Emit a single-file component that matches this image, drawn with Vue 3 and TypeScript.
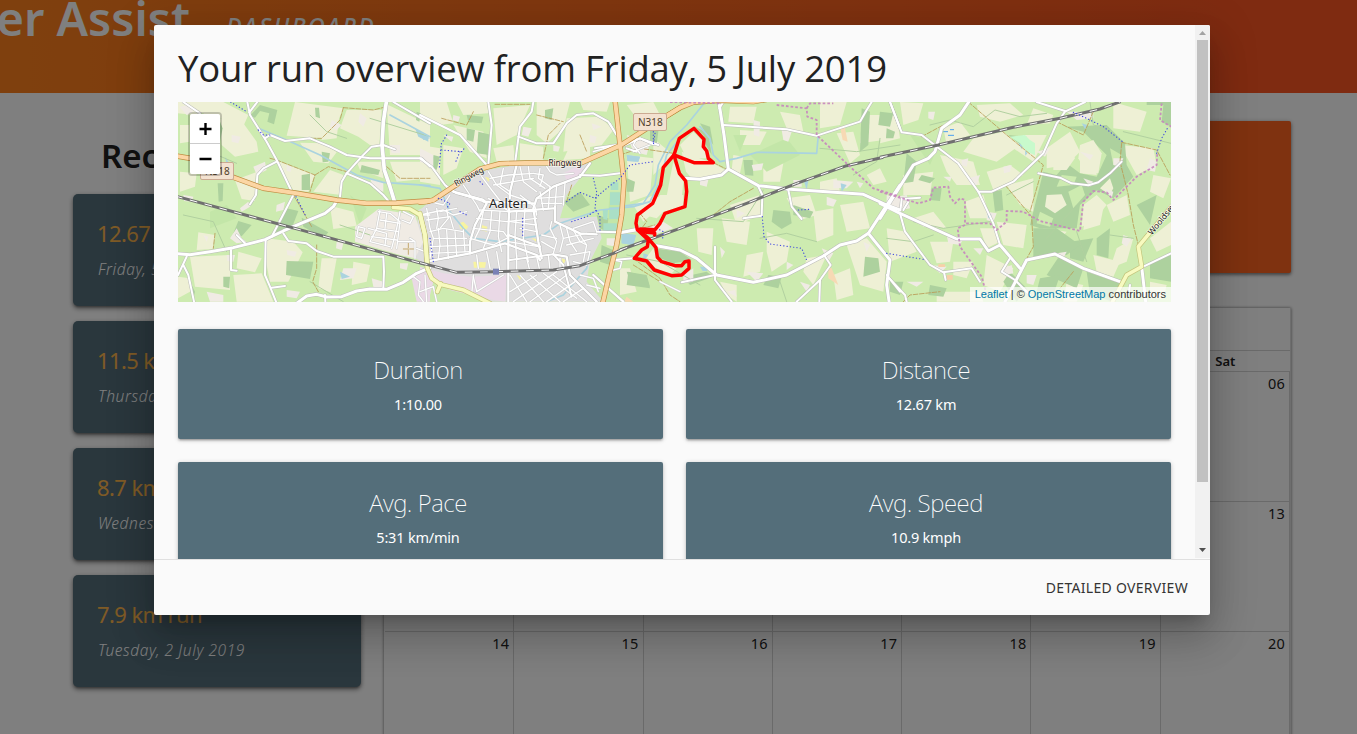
<script setup lang="ts">
interface Shape { t: string; p: string; w?: number }

const runs = [
  { title: '12.67 km run', date: 'Friday, 5 July 2019' },
  { title: '11.5 km run', date: 'Thursday, 4 July 2019' },
  { title: '8.7 km run', date: 'Wednesday, 3 July 2019' },
  { title: '7.9 km run', date: 'Tuesday, 2 July 2019' },
]
const stats = [
  { name: 'Duration', value: '1:10.00' },
  { name: 'Distance', value: '12.67 km' },
  { name: 'Avg. Pace', value: '5:31 km/min' },
  { name: 'Avg. Speed', value: '10.9 kmph' },
]
const weekdays = ['Sun', 'Mon', 'Tue', 'Wed', 'Thu', 'Fri', 'Sat']
const days = ['30', '01', '02', '03', '04', '05', '06', '07', '08', '09', '10', '11', '12', '13', '14', '15', '16', '17', '18', '19', '20']

// Map sections share one scale; each has its own origin.
const origin: Record<string, number> = { a: 170, b: 420, c: 620, d: 880 }
const place = (t: string): string => `translate(${origin[t]} 95) scale(.33333)`
const parse = (t: string, text: string): Shape[] =>
  text.trim().split('\n').map((line) => ({ t, p: line.trim() }))
const parseRoads = (t: string, w: number, text: string): Shape[] =>
  parse(t, text).map((s) => ({ ...s, w }))

const fields: Shape[] = [
  ...parse('a', `24,21 160,21 235,60 215,105 150,68 24,55
    150,70 220,85 260,140 265,170 195,185 155,150
    375,21 520,40 505,75 455,130 350,122
    390,143 460,145 500,172 475,205 430,200
    530,45 635,45 628,150 600,150 565,125 510,100
    315,195 435,240 415,290 370,285
    480,225 520,240 515,300 430,290
    195,255 258,232 255,318 215,312
    85,412 135,420 128,462 80,465
    290,430 370,440 398,472 355,560 300,560 288,500
    205,470 275,490 255,532 200,520
    60,485 180,480 180,585 75,575
    24,545 60,550 60,590 24,610
    455,490 500,490 482,592 445,580
    480,332 550,350 560,392 490,402
    190,540 275,535 310,620 200,620
    650,28 780,90 780,180 660,180
    560,200 635,200 640,250 570,225
    660,200 760,200 780,250 680,260
    30,230 80,235 75,275 30,290
    30,90 58,90 58,140 30,145
    550,500 600,510 590,560 545,570
    450,60 510,45 500,130 455,135`),
  ...parse('b', `0,21 80,21 100,85 60,90 0,60
    220,40 330,30 290,120 230,150
    100,90 190,110 200,190 150,170
    350,21 450,21 430,100 380,145 350,120
    0,150 60,160 60,270 0,260
    440,70 540,65 580,105 545,150 430,170
    620,180 700,190 690,300 630,320
    620,30 700,21 720,60 650,70
    70,150 130,160 110,220 70,240
    220,160 280,150 285,200 230,200
    300,145 370,155 370,195 300,195
    460,130 510,140 510,190 430,195
    110,21 200,21 205,55 130,60
    480,21 570,21 560,50 490,45
    640,330 700,300 740,320 670,380
    700,130 760,180 700,240`),
  ...parse('c', `330,35 410,35 400,85 325,80
    360,105 440,110 420,150 360,150
    480,50 540,60 550,110 500,100
    185,170 280,205 315,225 300,245 215,250 198,230
    120,300 190,300 190,335 130,350 110,370 70,360
    330,330 420,300 420,360 350,390
    305,370 390,380 380,450 320,440
    440,410 510,440 500,500 455,530 440,470
    300,560 350,570 350,620 320,600
    500,310 570,300 590,360 540,375
    600,260 650,250 660,290 600,290
    660,330 730,320 750,400 680,410
    730,60 830,60 830,130 720,145
    740,240 780,220 800,260 760,270
    560,490 620,480 580,570 550,530
    680,450 740,430 800,500 790,590 720,570
    70,500 150,540 170,520 110,490 100,460
    0,520 30,520 50,590 0,600
    220,110 250,140 260,190 200,190 180,150
    580,350 640,340 640,420 590,440
    340,180 370,185 360,235 335,225
    430,200 490,205 480,260 430,260
    600,21 680,21 660,90 600,100
    650,115 700,110 720,180 690,205
    230,400 280,400 275,480 235,470
    380,480 430,470 420,530 370,545
    640,540 690,520 700,600 650,615
    160,200 190,260 185,310 135,330 150,250`),
  ...parse('d', `60,21 130,25 115,75 70,90
    290,30 390,25 430,60 360,80 300,65
    280,130 370,110 420,150 350,200 250,170
    20,60 50,60 60,130 0,145
    180,180 280,200 300,270 230,270 200,230
    430,120 500,120 460,200 400,160
    320,230 390,210 430,240 340,285
    380,270 460,250 460,350 420,330
    70,240 160,230 150,300 70,300
    255,320 310,300 330,370 270,370
    350,380 440,390 430,460 370,450
    20,400 80,410 110,470 30,500
    320,480 400,520 360,590 310,570
    150,440 220,440 210,500 170,505
    500,160 570,110 600,170 560,210 500,220
    600,160 640,170 650,240 600,235
    620,340 670,340 660,390 610,405
    720,150 820,160 830,210 770,240
    700,21 800,50 780,110 700,100
    760,430 740,500 690,520 710,460
    490,290 560,300 570,340 510,350
    810,430 873,380 873,450 830,470
    490,400 560,410 510,470 470,460
    640,480 720,500 700,545 650,530
    170,590 300,590 310,620 170,620
    190,100 240,80 270,120 200,150
    460,40 520,60 510,85 440,90
    100,370 160,350 200,400 130,395
    300,400 345,400 360,440 320,460
    220,500 280,500 260,550 220,540
    680,330 740,300 750,360 700,380
    820,240 873,250 850,310 810,290
    560,560 610,570 590,620 550,620
    810,560 860,570 850,610 810,610`),
]
const lightGreens: Shape[] = [
  ...parse('a', `100,55 120,100 95,130 65,60
    540,300 590,340 570,390
    120,350 170,330 200,370 120,400`),
  ...parse('c', `340,120 380,120 360,170
    390,180 500,130 540,180 440,230`),
  ...parse('d', `90,120 180,140 150,210`),
  ...parse('b', `570,290 598,290 600,400 560,400`),
]
const woods: Shape[] = [
  ...parse('a', `270,30 322,45 312,88 292,80 298,55 270,48 255,68 240,62
    350,498 430,500 420,552 348,540
    350,340 385,348 365,400 308,422
    395,368 475,412 460,430 400,395
    205,378 245,390 215,424 190,415
    395,240 420,236 420,285 395,285
    143,265 160,265 158,318 146,320
    435,38 447,38 450,70 437,65
    455,170 480,175 475,200 458,202
    160,545 180,545 178,580 160,575
    575,210 630,225 625,240 570,232
    740,50 752,55 748,80 738,75
    150,80 158,100 150,140
    60,560 75,590 68,620`),
  ...parse('b', `175,110 215,120 208,180 170,175
    140,100 165,105 160,140 140,135
    140,60 190,65 185,85 145,82
    375,45 400,40 395,75 375,70
    430,320 480,290 510,330 460,350
    530,360 565,370 560,410 540,400
    620,250 645,260 640,290 620,290
    625,530 680,545 690,580 620,570
    690,90 720,70 710,150 690,140
    545,450 590,470 570,510 540,500
    40,180 60,185 50,225 35,215`),
  ...parse('c', `225,95 265,115 275,180 258,150 250,120
    370,195 398,195 400,242 375,240
    460,345 510,350 515,385 485,402 455,380
    780,50 820,55 810,95 775,90
    725,40 750,50 745,150 720,170
    520,330 580,350 570,370 520,360
    20,530 80,540 90,575 35,570
    100,460 180,470 215,495 160,505 120,490
    445,540 485,545 475,580 430,570
    735,485 775,490 780,530 730,545
    190,545 260,530 280,545 210,570
    240,85 270,95 280,150 262,125`),
  ...parse('d', `555,95 680,90 735,145 740,210 760,245 700,310 650,285 600,330 590,400 480,400 450,390 490,230 530,240 560,205 600,235 650,245 680,180 610,110
    800,21 873,21 873,95 845,80 850,30 800,30
    80,175 110,200 100,260 70,265
    155,278 185,280 180,318 150,315
    338,290 365,285 370,345 345,350
    385,120 440,125 420,135 465,180 440,165
    540,480 610,520 590,580 500,540
    620,530 720,565 700,620 630,600
    570,440 640,430 610,500 570,490
    460,400 530,400 600,450 560,480 460,490
    810,500 873,480 873,560 810,550
    480,550 540,540 520,600 470,590
    30,560 70,560 60,600 30,590
    650,430 690,400 685,490 650,480
    770,330 830,300 810,390
    125,240 165,250 150,265 115,255
    20,100 45,110 40,130 18,130
    370,560 390,530 440,580 410,620
    150,570 200,580 190,605 145,600`),
]
const clearings: Shape[] = [
  ...parse('d', `500,300 545,298 560,330 525,355 495,335
    600,150 640,135 665,175 655,235 620,235 595,190
    520,185 560,140 585,190 560,225 520,225
    660,280 690,250 700,280 690,300
    610,330 650,300 680,330 640,380 605,395`),
]
const glades: Shape[] = [
  ...parse('d', `565,290 605,270 615,300 580,340
    480,350 520,370 510,395 470,385
    545,240 590,245 580,270 530,275
    690,160 725,180 700,210`),
]
const town: Shape[] = [
  ...parse('b', `100,278 200,225 290,210 420,212 505,205 480,250 440,300 420,370 530,365 545,430 510,500 500,560 550,620 200,620 60,550 20,510 0,500 0,345 40,310`),
  ...parse('a', `745,345 780,330 780,510 735,490`),
]
const yards: Shape[] = [
  ...parse('a', `555,395 625,342 735,360 760,440 735,490 690,480 555,440
    185,120 212,125 205,145 185,140
    485,75 515,90 500,105 480,95
    250,215 285,200 290,225 260,240
    350,210 365,215 362,230 350,228
    200,400 215,430 230,440 200,445 180,430
    100,420 115,425 110,440
    570,55 590,70 580,95 565,80
    320,330 345,320 340,345 318,350
    605,550 640,560 635,580 610,575
    500,440 520,445 515,465 498,460
    170,480 195,480 190,500 172,498
    110,590 160,600 160,620 120,620
    350,585 390,590 380,610 350,605
    40,300 70,305 65,320 42,318
    210,340 235,320 240,335 215,350
    660,150 690,150 690,175 665,175
    690,505 715,505 710,525 690,520
    600,250 640,260 640,290 610,280
    520,520 560,520 550,550 510,555
    28,35 60,30 70,50 50,60
    350,465 380,470 375,485 352,480`),
  ...parse('b', `100,60 120,65 115,80 98,75
    510,120 530,125 525,145 508,142
    400,150 420,155 415,170 400,168
    620,120 690,140 680,180 640,170
    650,410 730,380 760,400 700,420
    560,430 600,430 590,455 560,450
    0,160 40,180 40,215 0,200
    515,85 545,95 520,105
    70,120 100,125 95,140
    310,95 335,100 325,125 305,120`),
  ...parse('c', `400,75 420,80 418,125 402,120
    485,105 515,110 505,140 490,135
    240,250 265,255 260,275 240,270
    395,210 430,205 425,225 400,228
    520,255 545,255 545,275 522,275
    800,300 840,310 840,350 800,345
    350,345 375,355 350,370
    620,305 650,315 640,335 620,330
    300,455 315,470 305,490
    605,460 640,475 625,500
    190,540 220,520 220,560 190,565
    320,590 345,585 350,605
    710,260 730,265 720,280
    380,530 430,535 410,560
    500,500 520,510 500,525
    730,440 750,450 740,470
    640,255 700,260 680,280 640,280
    540,560 570,570 560,590`),
  ...parse('d', `20,310 80,300 90,340 40,350
    245,195 265,190 260,215 245,210
    370,215 395,210 390,230 372,235
    265,250 300,240 290,270 270,265
    145,50 165,50 160,75 145,70
    190,245 215,245 210,260
    320,350 350,355 340,380 320,375
    200,420 250,430 240,450 205,445
    280,460 310,460 300,480
    370,520 395,510 400,535 375,540
    440,540 470,540 460,570 440,565
    470,170 510,160 495,185
    560,50 640,50 640,70 590,75
    600,170 640,180 630,195
    700,190 730,190 720,215 700,210
    670,280 700,290 695,310
    610,250 640,260 630,275
    730,420 755,430 740,455 725,445
    530,475 560,470 550,490
    150,510 200,515 180,535
    810,190 830,200 825,230 800,225
    80,560 130,560 110,575`),
]
const industry: Shape[] = [
  ...parse('b', `0,515 70,535 150,545 260,540 255,620 190,610 90,585 40,560 25,620 0,620
    430,235 470,215 490,220 475,250 440,255`),
  ...parse('a', `725,550 780,520 780,620 740,620`),
]
const waters: Shape[] = [
  ...parse('a', `735,100 775,125 775,140 745,125
    510,530 540,545 515,552
    165,185 178,205 170,210`),
  ...parse('b', `620,180 660,185 655,200 622,198
    605,415 648,420 640,450 605,445
    0,110 30,130 10,135`),
  ...parse('c', `240,515 262,515 262,528 248,528
    5,415 48,420 40,450 5,445
    662,265 680,270 665,290
    552,258 565,258 560,285
    20,180 60,185 55,200 22,198
    70,475 85,480 70,500`),
  ...parse('d', `415,145 430,150 425,162
    605,85 622,90 615,102
    322,355 335,360 325,370
    435,165 442,175 436,182`),
]
const sports: Shape[] = parse('b', `572,262 595,262 595,285 572,285
    570,292 600,292 600,330 570,330
    568,336 600,336 598,372 568,372
    548,345 564,345 562,375 550,372
    550,385 590,385 590,410 550,410`)
const streams: Shape[] = [
  ...parse('a', `265,100 350,135 450,180 560,240 640,262 780,272
    660,60 780,125`),
  ...parse('b', `0,270 60,280 90,350 130,400 160,430 240,440 370,420 420,385 540,345 640,335 690,320 720,260 740,180 780,130
    510,470 500,520 430,600 380,620`),
  ...parse('c', `250,28 200,90 150,140 115,210 105,270 70,325 0,335
    240,95 270,130 280,180 300,200 350,190 410,172 590,175 595,120`),
]
const hedges: Shape[] = [
  ...parse('a', `600,70 780,125
    95,160 200,205
    420,60 470,110 530,130
    40,360 130,380 170,470
    510,390 600,420
    420,560 470,590 520,620`),
  ...parse('c', `430,285 370,380 230,370
    600,160 710,170 840,150
    420,430 500,415 590,440
    20,480 120,500 240,570
    480,560 500,620
    780,130 770,200 700,240`),
  ...parse('d', `150,90 210,75 280,95 345,45 420,65 500,55
    380,300 460,260
    100,380 190,400 330,380
    500,430 590,330 650,285
    730,110 873,145
    20,430 100,440 160,420
    590,410 620,500
    690,420 760,430
    630,21 640,90 680,100`),
]
const tracks: Shape[] = [
  ...parse('a', `300,190 320,195 435,240 420,290
    435,240 475,215 530,230
    520,38 510,75 455,130 420,130
    520,38 610,45 650,35
    440,450 440,520 428,560 445,590
    650,215 690,250 780,250
    370,300 385,325 425,395
    135,415 130,460
    715,445 715,478
    700,462 732,462`),
  ...parse('b', `65,70 140,90 160,50
    370,190 385,120 420,85
    225,28 330,28
    350,60 430,80
    640,510 720,560 780,590
    455,270 440,320
    480,120 500,170`),
  ...parse('c', `280,203 325,225
    60,355 80,380 65,400 105,390
    400,280 330,320 280,360 200,390
    40,490 120,550 150,600 180,620
    0,180 60,160 160,175`),
  ...parse('d', `265,21 380,120 490,210 450,350
    375,270 455,365 460,455 435,500
    530,80 610,120 640,50
    725,145 720,200 745,300 760,390 775,450
    725,142 830,165 870,240
    70,620 90,600 180,590
    580,530 540,580
    125,125 190,90`),
]
const roads: Shape[] = [
  ...parseRoads('b', 4, `205,230 230,270 270,300 330,320
    185,245 215,285 250,330
    250,220 240,270 270,290
    130,270 170,330 180,350
    300,215 310,260 350,290
    325,215 330,250 375,280
    360,220 355,250 390,275
    210,250 265,240 340,235
    220,270 280,260 340,250
    340,235 370,240 360,275
    380,215 390,230 410,240 460,235
    360,290 370,345
    390,275 385,340
    410,270 405,335
    435,265 430,330
    350,310 430,305
    365,325 425,325
    300,300 345,335 350,360
    205,310 270,350
    130,300 190,320
    180,345 270,350 350,350
    170,370 260,380 350,370
    160,400 250,410 265,430
    190,350 180,400 165,430
    215,350 210,410 190,460
    240,350 235,425 245,470
    290,350 285,420 290,490
    315,340 310,430 325,500
    270,380 350,390
    265,440 355,455
    300,400 350,410
    150,430 220,450 260,430
    0,360 70,345 100,360 140,350
    20,340 30,400 40,430 30,490
    50,340 55,370 50,400
    80,345 85,370 60,400
    20,375 90,365 100,400
    30,410 70,400 130,410
    40,430 140,430
    55,400 60,450 55,490
    80,405 85,490
    105,410 110,480
    130,405 135,470
    30,455 150,450
    30,475 150,470
    395,380 390,400 410,440 400,475
    420,390 430,430 420,470
    440,400 450,440 470,470
    460,405 480,440 500,450
    430,430 500,415
    440,450 520,430
    460,400 520,380 530,410
    480,420 500,450 490,500
    450,480 510,470 500,510 460,500
    365,420 410,430
    365,440 400,460
    270,540 320,620
    300,540 370,620
    330,540 420,620
    370,535 470,610
    400,540 500,620
    270,590 350,540
    280,620 410,530
    330,620 440,540
    380,620 465,560
    430,620 490,580
    200,470 210,520
    170,480 175,520
    230,470 240,530
    290,480 290,525
    320,490 330,530
    350,485 360,530
    385,480 390,525
    420,490 420,520
    480,540 520,550 535,590
    500,570 540,580
    90,300 70,330 30,320
    60,350 110,340`),
  ...parseRoads('a', 4, `625,350 660,355 690,380 680,460
    690,350 680,400 665,460
    630,375 690,385
    620,400 685,410
    605,425 680,435
    630,345 620,400 600,440 660,455
    565,395 585,400 575,430 560,425 565,395
    595,400 650,415 645,450
    700,350 730,365 720,385 695,375
    650,355 645,400
    720,430 735,440 735,490
    740,460 765,470 765,500
    685,440 730,440
    750,360 780,360
    730,545 750,560 745,600 760,620
    765,540 770,620`),
  ...parseRoads('b', 4, `520,170 590,150
    590,120 570,85
    650,130 640,150 660,175
    720,560 780,590
    160,540 155,600
    0,590 40,575 50,620
    250,540 170,590 160,545
    580,495 605,500 600,520 580,525
    640,170 690,150`),
  ...parseRoads('a', 6, `40,21 90,55
    232,21 240,60 290,140 320,195 370,300 305,425
    262,21 238,52
    285,130 300,120 345,138 420,130 480,155 530,180 600,190 755,190 780,215
    510,305 515,260 530,235 575,185 605,155 640,150 675,163
    530,235 600,265 640,300 655,318
    320,200 280,220 262,240 258,300 240,328
    287,434 285,540 300,575 318,620
    305,578 345,573
    340,415 355,438 410,445 440,468 490,485 640,485 642,530 640,580
    200,420 225,445
    183,465 183,525 200,527
    24,540 50,485
    40,510 55,540 72,620
    465,600 466,620
    670,21 720,50 780,85`),
  ...parseRoads('b', 6, `0,60 60,90 120,120 200,210
    205,21 215,90 205,210
    340,21 335,50 300,95 295,130 285,205
    295,125 350,145 400,145 440,85 470,60 520,55 565,80 590,120
    0,190 35,215 75,270 100,290
    80,275 110,295 190,315
    455,605 430,510 400,478 270,495
    530,410 600,412 660,400
    480,240 540,242 600,235
    605,155 660,130 715,150
    580,495 640,490
    525,160 590,150`),
  ...parseRoads('c', 6, `310,90 500,103 590,122 720,80 740,45 755,21
    310,21 298,40
    0,415 55,405
    185,562 285,540
    285,455 285,555 335,620
    415,275 427,300 425,362 370,370
    505,285 515,335 545,372
    612,480 632,510 600,555 530,620
    600,555 598,620
    810,21 840,100
    800,540 840,590
    10,150 60,130 100,148
    20,160 50,170`),
  ...parseRoads('d', 6, `30,21 65,112 125,120 235,205 295,290 340,385 360,450
    295,290 335,290 400,260 490,175 530,85 555,50 615,21
    470,21 555,48
    475,235 540,248 575,265 625,271 655,262 690,235 725,200
    60,355 75,410 150,510 190,532 275,520 300,560
    192,532 197,555
    62,340 65,312 120,308
    70,345 85,320
    28,550 75,600 80,620
    790,515 873,475
    390,490 365,530 405,555 450,600
    750,570 745,600`),
  ...parseRoads('b', 7, `290,210 270,290 265,400 265,620
    100,290 190,315 200,325 165,390 150,440 150,475
    20,500 150,475 255,445 350,480 360,495
    480,245 400,275 350,310 340,340 355,440 365,490
    405,335 405,380 480,415 530,418
    400,478 440,485 450,540 500,590 530,620
    190,320 340,325
    265,350 400,340
    265,420 360,455
    510,205 480,245
    520,540 610,620`),
  ...parseRoads('a', 9, `15,476 60,479 120,470 190,458 285,434 340,408 400,382 465,355 490,335 500,318
    380,625 410,603 440,598 470,606 515,605 560,588 600,582 650,583 700,562 740,535 780,518`),
  ...parseRoads('a', 11, `650,15 640,80 636,150 643,225 660,275 675,325`),
  ...parseRoads('c', 9, `298,30 312,120 325,222 415,272 510,283 730,298 800,330 840,345
    325,222 305,240 240,253 195,250
    110,452 180,465 230,490 290,540 400,562 500,540 610,483 660,450 710,438 745,415 840,270
    745,415 810,495 800,570 808,625`),
  ...parseRoads('d', 9, `270,15 240,60 185,100 165,170 145,190 100,210 0,370
    0,325 60,355 230,432 300,432 325,468 360,450 420,520
    375,620 440,495 525,477 610,520 720,560
    785,515 797,620`),
]
const arterials: Shape[] = [
  ...parse('a', `15,182 90,195 190,247 280,280 370,293 500,315 590,325 680,324 780,317`),
  ...parse('b', `0,322 20,320 40,315 100,275 180,222 240,206 340,203 480,205 600,152 720,75 780,38
    585,15 600,150 612,260 605,360 590,450 570,530 548,625`),
  ...parse('c', `120,75 180,38 220,22 300,16 400,20 460,10`),
]
const collectors: Shape[] = [
  ...parse('a', `670,337 720,342 750,360 765,420 772,510`),
  ...parse('b', `0,355 15,420 22,520 35,550 60,568 130,585 210,625
    62,566 52,590`),
  ...parse('d', `880,328 775,455 785,515 740,540 695,625`),
]
const railways: Shape[] = [
  ...parse('a', `15,303 400,407 765,508`),
  ...parse('b', `0,503 110,532 230,530 400,525 480,512 580,475 620,458`),
  ...parse('c', `0,465 180,400 380,325 530,265 680,212 790,187`),
  ...parse('d', `0,187 175,150 400,97 540,70 660,42 722,20`),
]
const borders: Shape[] = [
  ...parse('c', `470,30 560,40 562,65 590,75 590,120 690,215 760,280 840,305
    560,40 570,25 640,25
    150,21 300,25`),
  ...parse('d', `0,290 115,325 150,315 160,278 205,275 210,305 225,325 240,310 255,315 255,385 330,385 350,405 380,380 380,348 430,350 480,378 600,408 610,320 640,288 680,292 700,315 770,245 830,210 832,170
    255,390 233,400 240,455 265,490 305,545 320,600
    845,25 840,75 873,95`),
]
const paths: Shape[] = [
  ...parse('a', `182,21 230,50
    265,105 280,120 305,120
    378,305 408,365`),
  ...parse('b', `80,120 62,150 65,165 125,170 137,155
    62,165 58,220
    120,170 105,205
    55,310 90,325 80,340
    440,320 480,292 525,310 560,280 600,250 630,210 700,200
    520,250 530,290 525,340 540,365 540,410
    455,380 500,365 530,345
    308,370 308,425
    120,350 140,360
    30,430 40,500
    700,110 700,150
    180,260 190,270`),
  ...parse('c', `427,365 432,425 450,447 545,460 562,500
    110,400 130,410 128,430
    105,115 100,150
    535,345 570,343`),
  ...parse('d', `580,52 620,70 670,95 730,142
    830,175 845,130 865,95
    20,475 130,493`),
]
const specials: Shape[] = parse('b', `160,500 198,502 195,518 162,518
    185,390 202,395 200,410 183,405
    117,385 130,380 145,395 135,408 120,400
    195,245 210,250 205,260
    335,430 350,432 348,440
    290,540 305,545 300,555
    425,490 437,495 430,510`)
const route: string[] = [
  '162,180 178,130 222,100 252,133 250,155 260,168 265,190 280,203 222,203 162,180 130,217 122,270 98,325 52,360 48,385 52,404 85,435 82,455 65,465 43,490 80,498 103,525 155,542 185,540 207,520 207,498 195,500 185,512 165,512 125,500 112,487 108,458 85,430 55,404',
  '162,180 178,235 197,258 200,290 195,335 135,355 120,385 105,404 60,402 80,412 104,414 104,420 98,408',
]
</script>

<template>
  <div class="page">
    <header class="topbar">
      <div class="brand">Runner Assist</div>
      <nav class="nav">DASHBOARD</nav>
    </header>
    <main class="columns">
      <section class="recent">
        <h2>Recent runs</h2>
        <article v-for="run in runs" :key="run.date" class="run">
          <div class="run-title">{{ run.title }}</div>
          <div class="run-date">{{ run.date }}</div>
        </article>
      </section>
      <section class="right">
        <div class="banner"></div>
        <div class="calendar">
          <div class="cal-top"></div>
          <div class="cal-head"><span v-for="d in weekdays" :key="d">{{ d }}</span></div>
          <div class="cal-grid"><span v-for="d in days" :key="d">{{ d }}</span></div>
        </div>
      </section>
    </main>

    <div class="overlay"></div>
    <div class="modal" role="dialog">
      <div class="body">
        <div class="content">
          <h1>Your run overview from Friday, 5 July 2019</h1>
          <div class="map">
            <svg viewBox="178 102 993 200" width="993" height="200">
              <rect x="178" y="102" width="993" height="200" fill="#cdebb0" />
              <polygon v-for="(s, i) in fields" :key="i" :points="s.p" :transform="place(s.t)" fill="#eef0d5" />
              <polygon v-for="(s, i) in lightGreens" :key="i" :points="s.p" :transform="place(s.t)" fill="#c3e6a8" />
              <polygon v-for="(s, i) in town" :key="i" :points="s.p" :transform="place(s.t)" fill="#dfdede" />
              <polygon v-for="(s, i) in industry" :key="i" :points="s.p" :transform="place(s.t)" fill="#ead9e6" />
              <polygon v-for="(s, i) in woods" :key="i" :points="s.p" :transform="place(s.t)" fill="#add19e" />
              <polygon v-for="(s, i) in glades" :key="i" :points="s.p" :transform="place(s.t)" fill="#cdebb0" />
              <polygon v-for="(s, i) in clearings" :key="i" :points="s.p" :transform="place(s.t)" fill="#eef0d5" />
              <polygon v-for="(s, i) in yards" :key="i" :points="s.p" :transform="place(s.t)" fill="#f0ebe4" />
              <polygon v-for="(s, i) in sports" :key="i" :points="s.p" :transform="place(s.t)" fill="#aadfc6" />
              <polygon v-for="(s, i) in waters" :key="i" :points="s.p" :transform="place(s.t)" fill="#aad3df" />
              <polygon v-for="(s, i) in specials" :key="i" :points="s.p" :transform="place(s.t)" fill="#f8f4a0" />
              <g :transform="place('c')" fill="#f7d9b4"><path d="M660 95l15 5 8 40-15-5zM625 515l10 5 20 50-30-20zM20 605l20 15H12z" /></g>
              <g :transform="place('d')"><path d="M390 125l45-5 15 15 15 10v35l-25-10-20-25z" fill="#c8facc" /><path d="M175 508h20v8h-20zM200 540h18v14h-18z" fill="#f7d0a8" /></g>
              <g fill="none" stroke-linejoin="round" stroke-linecap="round">
                <polyline v-for="(s, i) in hedges" :key="i" :points="s.p" :transform="place(s.t)" stroke="#b1d0a0" stroke-width="3" />
                <polyline v-for="(s, i) in streams" :key="i" :points="s.p" :transform="place(s.t)" stroke="#aad3df" stroke-width="5" />
                <polyline v-for="(s, i) in tracks" :key="i" :points="s.p" :transform="place(s.t)" stroke="#b99a55" stroke-width="2.5" stroke-dasharray="14 5" />
                <polyline v-for="(s, i) in roads" :key="i" :points="s.p" :transform="place(s.t)" :stroke="s.w! > 4 ? '#bcbcba' : '#cccccb'" :stroke-width="s.w! + 3" />
                <polyline v-for="(s, i) in roads" :key="i" :points="s.p" :transform="place(s.t)" stroke="#fff" :stroke-width="s.w" />
                <polyline v-for="(s, i) in collectors" :key="i" :points="s.p" :transform="place(s.t)" stroke="#c3c37b" stroke-width="15" />
                <polyline v-for="(s, i) in collectors" :key="i" :points="s.p" :transform="place(s.t)" stroke="#f7fabf" stroke-width="11" />
                <polyline v-for="(s, i) in arterials" :key="i" :points="s.p" :transform="place(s.t)" stroke="#c08d42" stroke-width="16" />
                <polyline v-for="(s, i) in arterials" :key="i" :points="s.p" :transform="place(s.t)" stroke="#fcd6a4" stroke-width="12" />
                <g stroke-linecap="butt">
                  <polyline v-for="(s, i) in railways" :key="i" :points="s.p" :transform="place(s.t)" stroke="#707070" stroke-width="9" />
                  <polyline v-for="(s, i) in railways" :key="i" :points="s.p" :transform="place(s.t)" stroke="#fff" stroke-width="3" stroke-dasharray="23 23" />
                  <polyline v-for="(s, i) in borders" :key="i" :points="s.p" :transform="place(s.t)" stroke="#c786be" stroke-width="5.500" stroke-dasharray="8 6" opacity=".9" />
                </g>
                <polyline v-for="(s, i) in paths" :key="i" :points="s.p" :transform="place(s.t)" stroke="#3d45e0" stroke-width="3.4" stroke-dasharray="1 9" />
              </g>
              <g :transform="place('b')"><path d="M219 521h18v18h-18z" fill="#7a81b5" /></g>
              <g :transform="place('d')" stroke="#4a9ff0" stroke-width="3"><path d="M190 110h14M210 104h12M204 121h18" /></g>
              <g class="shield">
                <rect x="633.5" y="113.5" width="33" height="17" rx="1.5" />
                <rect x="200.5" y="162.5" width="33" height="17" rx="1.5" />
                <text x="638" y="126">N318</text>
                <text x="205" y="175.2">N318</text>
              </g>
              <g class="place">
                <text class="city" x="489" y="208" textLength="39">Aalten</text>
                <text x="548.5" y="166.3" textLength="33">Ringweg</text>
                <text transform="translate(456 186.5) rotate(-28)" textLength="32">Ringweg</text>
                <text transform="translate(1152 235.500) rotate(-51)">Wooldseweg</text>
              </g>
              <g :transform="place('c')" fill="none" stroke="#f00" stroke-width="10.500" stroke-linejoin="round" stroke-linecap="round">
                <polyline v-for="p in route" :key="p" :points="p" />
              </g>
            </svg>
            <div class="zoom">
              <button type="button"><svg width="30" height="30"><path d="M9.500 15h12M15.500 9v12" /></svg></button>
              <button type="button"><svg width="30" height="30"><path d="M9.500 15h12" /></svg></button>
            </div>
            <div class="credit"><a>Leaflet</a> | © <a>OpenStreetMap</a> contributors</div>
          </div>
          <div class="stats">
            <div v-for="s in stats" :key="s.name" class="stat">
              <div class="stat-name">{{ s.name }}</div>
              <div class="stat-value">{{ s.value }}</div>
            </div>
          </div>
        </div>
        <div class="scrollbar">
          <svg width="15" height="15"><path d="M4 10h7L7.500 6z" fill="#a3a3a3" /></svg>
          <div class="thumb"></div>
          <svg class="down" width="15" height="15"><path d="M4 5h7L7.500 9z" fill="#505050" /></svg>
        </div>
      </div>
      <footer class="foot">DETAILED OVERVIEW</footer>
    </div>
  </div>
</template>

<style>
body { margin: 0; overflow: hidden; }
</style>

<style scoped>
* { box-sizing: border-box; }
.page { position: relative; width: 1357px; height: 734px; overflow: hidden; background: #fff; color: #222; font-family: "Noto Sans", "Open Sans", sans-serif; }
.topbar { height: 93px; background: linear-gradient(90deg, #ff801c 2%, #ff5722 90%); color: #fff; display: flex; align-items: flex-start; }
.brand { width: 190px; display: flex; justify-content: flex-end; white-space: nowrap; font-size: 47px; line-height: 62px; margin-top: -13px; font-weight: 600; letter-spacing: 0; }
.nav { margin: 10px 0 0 36px; font-size: 23.500px; line-height: 32px; font-style: italic; font-weight: 500; letter-spacing: 2.100px; }
.columns { display: flex; padding-left: 73px; gap: 23px; }
.recent { width: 288px; flex: none; }
h2 { margin: 0 0 0 28px; padding-top: 39px; height: 101px; font-size: 33px; line-height: 48px; font-weight: 600; }
.run { height: 112px; margin-bottom: 15px; padding: 24px; border-radius: 5px; background: #546e7a; box-shadow: 0 2px 2px rgba(0,0,0,.14), 0 3px 1px -2px rgba(0,0,0,.12), 0 1px 5px rgba(0,0,0,.2), 0 3px 5px rgba(0,0,0,.3); }
.run-title { margin-top: -1px; font-size: 22px; line-height: 32px; color: #ffb74d; letter-spacing: -.600px; }
.run-date { margin: 8px 0 0 1px; font-size: 15.500px; line-height: 25px; font-style: italic; font-weight: 300; letter-spacing: .600px; color: #fff; }
.right { width: 907px; }
.banner { height: 152px; margin-top: 28px; border-radius: 2px; background: #ff6421; box-shadow: 0 2px 3px rgba(0,0,0,.3), 0 1px 5px rgba(0,0,0,.3); }
.calendar { margin-top: 35px; height: 480px; padding-left: 1px; border-right: 1px solid #ddd; box-shadow: 0 0 3px rgba(0,0,0,.55); }
.cal-top { height: 42px; }
.cal-head, .cal-grid { display: grid; grid-template-columns: repeat(7, 1fr); }
.cal-head { border-top: 1px solid #d5d5d5; border-bottom: 1px solid #d5d5d5; height: 22px; font-size: 13px; line-height: 21px; font-weight: 600; text-align: center; }
.cal-grid span { height: 130px; padding: 1px 4px; border-right: 1px solid #d5d5d5; border-bottom: 1px solid #d5d5d5; text-align: right; font-size: 14.500px; line-height: 20px; letter-spacing: .200px; }
.overlay { position: absolute; inset: 0; background: rgba(0,0,0,.5); }
.modal { position: absolute; left: 154px; top: 25px; width: 1056px; height: 590px; display: flex; flex-direction: column; border-radius: 2px; background: #fafafa; overflow: visible; box-shadow: 0 24px 38px 3px rgba(0,0,0,.14), 0 9px 46px 8px rgba(0,0,0,.12), 0 11px 15px -7px rgba(0,0,0,.2); }
.body { height: 534px; display: flex; overflow: hidden; border-radius: 2px 2px 0 0; }
.content { width: 1041px; padding: 24px; }
h1 { margin: -1px 0 0; height: 54px; font: 400 36.480px/40px "Open Sans", sans-serif; letter-spacing: -.200px; white-space: nowrap; color: #212121; }
.map { position: relative; height: 200px; overflow: hidden; }
.map > svg { display: block; }
.shield rect { fill: #f3e2d0; stroke: #cbaa92; }
.shield text { font: 10px "Noto Sans", sans-serif; fill: #50412a; }
.place text { font: 8.300px "Noto Sans", sans-serif; fill: #222; stroke: rgba(255,255,255,.65); stroke-width: 1.500px; paint-order: stroke; }
.place .city { font-size: 13px; }
.zoom { position: absolute; left: 10px; top: 10px; width: 34px; border: 2px solid rgba(0,0,0,.2); border-radius: 4px; background-clip: padding-box; }
.zoom button { display: block; width: 30px; height: 30px; padding: 0; border: 0; background: #fff; border-radius: 0 0 2px 2px; }
.zoom button:first-child { border-bottom: 1px solid #ccc; border-radius: 2px 2px 0 0; }
.zoom svg { display: block; stroke: #000; stroke-width: 2.400; }
.credit { position: absolute; right: 0; bottom: 0; padding: 0 5px; background: rgba(255,255,255,.7); font: 11px/15px "Liberation Sans", sans-serif; color: #333; white-space: nowrap; }
.credit a { color: #0078a8; }
.stats { margin-top: 27px; display: grid; grid-template-columns: 485px 485px; column-gap: 23px; row-gap: 23px; }
.stat { height: 110px; padding: 24px 5px 0 0; border-radius: 2px; background: #546e7a; color: #fff; text-align: center; box-shadow: 0 2px 2px rgba(0,0,0,.14), 0 3px 1px -2px rgba(0,0,0,.12), 0 1px 5px rgba(0,0,0,.2); }
.stat-name { height: 34px; font-size: 24px; line-height: 34px; font-weight: 200; letter-spacing: -.450px; }
.stat-value { margin-top: 6px; font-size: 14.500px; line-height: 22px; letter-spacing: -.200px; }
.scrollbar { width: 15px; height: 533px; background: #f1f1f1; display: flex; flex-direction: column; align-items: center; }
.scrollbar svg { display: block; flex: none; }
.thumb { width: 11px; height: 442px; background: #c1c1c1; }
.down { margin-top: auto; }
.foot { height: 56px; border-top: 1px solid #e0e0e0; padding-right: 22px; text-align: right; font-size: 14px; line-height: 55px; letter-spacing: .300px; color: #343434; }
</style>
